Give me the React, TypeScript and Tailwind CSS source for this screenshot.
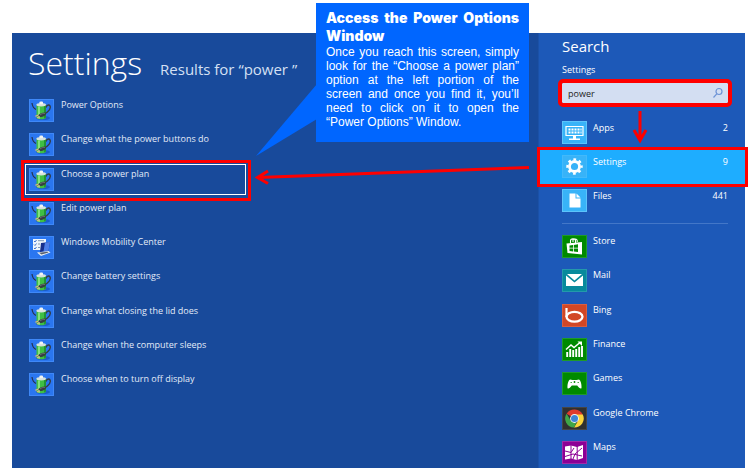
import React from 'react';

type IconName =
    | 'battery'
    | 'mobility'
    | 'apps'
    | 'settings'
    | 'files'
    | 'store'
    | 'mail'
    | 'bing'
    | 'finance'
    | 'games'
    | 'chrome'
    | 'maps';

interface ResultItem {
    label: string;
    icon: IconName;
    selected?: boolean;
}

interface ScopeItem {
    label: string;
    icon: IconName;
    count: number;
    selected?: boolean;
}

const results: ResultItem[] = [
    { label: 'Power Options', icon: 'battery' },
    { label: 'Change what the power buttons do', icon: 'battery' },
    { label: 'Choose a power plan', icon: 'battery', selected: true },
    { label: 'Edit power plan', icon: 'battery' },
    { label: 'Windows Mobility Center', icon: 'mobility' },
    { label: 'Change battery settings', icon: 'battery' },
    { label: 'Change what closing the lid does', icon: 'battery' },
    { label: 'Change when the computer sleeps', icon: 'battery' },
    { label: 'Choose when to turn off display', icon: 'battery' },
];

const scopes: ScopeItem[] = [
    { label: 'Apps', icon: 'apps', count: 2 },
    { label: 'Settings', icon: 'settings', count: 9, selected: true },
    { label: 'Files', icon: 'files', count: 441 },
];

const apps: { label: string; icon: IconName }[] = [
    { label: 'Store', icon: 'store' },
    { label: 'Mail', icon: 'mail' },
    { label: 'Bing', icon: 'bing' },
    { label: 'Finance', icon: 'finance' },
    { label: 'Games', icon: 'games' },
    { label: 'Google Chrome', icon: 'chrome' },
    { label: 'Maps', icon: 'maps' },
];

const tileColors: Record<IconName, string> = {
    battery: 'bg-[#2a76f0] border-[#3f88f8]',
    mobility: 'bg-[#2a76f0] border-[#3f88f8]',
    apps: 'bg-[#38b3f8] border-[#5cc3fb]',
    settings: 'bg-[#38b3f8] border-[#43b9fa]',
    files: 'bg-[#38b3f8] border-[#5cc3fb]',
    store: 'bg-[#008a00] border-[#1f9a2a]',
    mail: 'bg-[#078a9c] border-[#2499ab]',
    bing: 'bg-[#d24726] border-[#d95e41]',
    finance: 'bg-[#008a00] border-[#1f9a2a]',
    games: 'bg-[#008a00] border-[#1f9a2a]',
    chrome: 'bg-[#303030] border-[#454545]',
    maps: 'bg-[#8c0095] border-[#a02aa8]',
};

const Glyph: React.FC<{ name: IconName }> = ({ name }) => {
    switch (name) {
        case 'battery':
            return (
                <>
                    <ellipse cx="14" cy="19" rx="7" ry="2" fill="#1c5cc8" />
                    <path d="M3 4c.3 3 1 5 4 6.500" fill="none" stroke="#26324c" strokeWidth="1.200" />
                    <path d="M17 8.500c1-3.500 4.500-3 4.300 0-.2 2.800-2.500 4-4 5.500" fill="none" stroke="#343c45" strokeWidth="1.400" />
                    <path d="M7.500 6v12.500c0 2.400 9.500 2.400 9.500 0V6z" fill="#3fbf45" />
                    <path d="M9 7.500v12c.5.200 1.200.3 2 .3V7.500z" fill="#84df7e" />
                    <path d="M15 7v12.500l2-1V6z" fill="#229434" />
                    <ellipse cx="12.200" cy="5.800" rx="4.800" ry="1.700" fill="#d8e2dc" />
                    <path d="M10.500 4.800V3.200c0-.8 3.500-.8 3.500 0v1.600c0 .7-3.500.7-3.500 0z" fill="#f2f5f2" />
                    <path d="M9 17c1-2.500 4.500-4 8.500-3.500 0 2.500-3 4.500-6.500 4.600z" fill="#363d42" />
                    <path d="M11 16c1.500-1.300 3.200-1.700 5-1.600" fill="none" stroke="#7d8587" strokeWidth=".7" />
                    <path d="M6.300 17.300l3-1.200M7.800 19l3-1.400" stroke="#d9b27c" strokeWidth="1.200" />
                </>
            );
        case 'mobility':
            return (
                <>
                    <path d="M4 3h13v11H4z" fill="#eef4fb" />
                    <path d="M5 5l1 1 1.500-2M5 8.500l1 1 1.500-2M5 12l1 1 1.500-2" fill="none" stroke="#2c69cf" strokeWidth=".9" />
                    <path d="M9 4.700h6M9 8h2M9 11.500h2" stroke="#8098b5" strokeWidth="1" />
                    <path d="M12 7l9-1-1.500 9-8.500 1z" fill="#172f8c" />
                    <path d="M16 6.600l5-.6-1.500 9-5 .5z" fill="#4d7ee8" />
                    <path d="M8 16.500l11.500-1.500 2 1.500-9.500 3.500z" fill="#e9edf1" />
                    <path d="M10 16.800l8.500-1 1 .6-7 2.200z" fill="#59616f" />
                </>
            );
        case 'apps':
            return (
                <>
                    <path d="M4 5.500h17v9H4z" fill="none" stroke="#fff" strokeWidth="1.200" />
                    <path d="M6.500 8.500h2m1 0h2m1 0h2m1 0h2m1 0h1M6.500 11.500h2m1 0h2m1 0h2m1 0h2m1 0h1" stroke="#fff" strokeWidth="2" />
                    <path d="M11 15h3v2.500h4v1.500H7v-1.500h4z" fill="#fff" />
                </>
            );
        case 'settings':
            return (
                <g fill="none" stroke="#fff">
                    <circle cx="12.500" cy="11.500" r="5" strokeWidth="2.800" />
                    <circle cx="12.500" cy="11.500" r="7" strokeWidth="2.400" strokeDasharray="2.750 2.750" strokeDashoffset="1.370" />
                </g>
            );
        case 'files':
            return (
                <>
                    <path d="M7.500 4.500h6v5h5v9h-11z" fill="#fff" />
                    <path d="M14.500 4.500l4 4h-4z" fill="#fff" />
                </>
            );
        case 'store':
            return (
                <>
                    <path d="M8.500 8V5.800c0-2.600 5-2.600 5 0V8M11 7V5c.5-1.600 4-1.300 4.200.5V7" fill="none" stroke="#fff" strokeWidth="1.100" />
                    <path d="M4.500 8.500L20 7v12.500L5.500 18z" fill="#fff" />
                    <path d="M7.500 10.500l3.500-.5v2.800H7.500zM11.800 9.900l4.200-.6v3.500h-4.200zM7.500 13.600H11v2.900l-3.500-.4zM11.800 13.600H16v3.500l-4.200-.5z" fill="#008a00" />
                </>
            );
        case 'mail':
            return (
                <>
                    <path d="M4 6.500V17h17V6.500l-8.500 7z" fill="#fff" />
                    <path d="M5 5h15l-7.500 6.500z" fill="#fff" />
                </>
            );
        case 'bing':
            return (
                <>
                    <path d="M4.500 4v9" stroke="#fff" strokeWidth="2.200" />
                    <ellipse cx="12.500" cy="12.800" rx="8" ry="4.900" fill="none" stroke="#fff" strokeWidth="2.300" />
                </>
            );
        case 'finance':
            return (
                <>
                    <path d="M4 11.500l5-4.500 3 2.500 6-5" fill="none" stroke="#fff" strokeWidth="1.500" />
                    <path d="M15.500 3.500H20V8z" fill="#fff" />
                    <path d="M5.200 19v-5M8.200 19v-8M11.200 19v-7M14.200 19v-8M17.200 19V9M20 19V8" stroke="#fff" strokeWidth="1.900" />
                </>
            );
        case 'games':
            return (
                <>
                    <path d="M8 7.500l2.500.5h4l2.500-.5c1.500.8 2.800 4.500 2.500 8.500-.6 1.500-2.500-.3-4.300-2.500H9.800C8 15.700 6.100 17.500 5.500 16 5.200 12 6.500 8.300 8 7.500z" fill="#fff" />
                    <circle cx="12.500" cy="10" r=".9" fill="#008a00" />
                    <path d="M8.500 10.500h1.500M15.500 10.500H17" stroke="#008a00" strokeWidth=".7" />
                </>
            );
        case 'chrome':
            return (
                <>
                    <path d="M12.500 11.500L4.640 6.630A9.250 9 0 0 1 20.800 7.500z" fill="#df3b2d" />
                    <path d="M12.500 7.500h8.300A9.250 9 0 0 1 12 20.500l4-6.500z" fill="#fbd43a" />
                    <path d="M4.640 6.630L9 14l5.500 1.500-2.500 5A9.250 9 0 0 1 4.640 6.630z" fill="#3fa648" />
                    <circle cx="12.500" cy="11.500" r="4.400" fill="#f4f4f4" />
                    <circle cx="12.500" cy="11.500" r="3.500" fill="#3d85d6" />
                </>
            );
        case 'maps':
            return (
                <>
                    <path d="M3 5.500l6-1 6 1.500 6-2v13l-6 2-6-1.500-6 1z" fill="#fff" />
                    <path d="M9 4v14M15.200 5v15M3 10l6 1.500 3-4.500M3 15.500l8-2.500 9 2M11 18l2-5 7-6" fill="none" stroke="#8c0095" strokeWidth="1" />
                </>
            );
        default:
            return null;
    }
};

const Tile: React.FC<{ name: IconName }> = ({ name }) => (
    <span className={`${tileColors[name]} border w-[25px] h-[23px] shrink-0 overflow-hidden`}>
        <svg viewBox="1 1 23 21" className="block w-full h-full" aria-hidden="true">
            <Glyph name={name} />
        </svg>
    </span>
);

const ResultsPane: React.FC = () => (
    <main className="flex-1 flex flex-col bg-[#184a9b] pl-[13px] pb-[68px]">
        <header className="h-[62px] flex items-baseline gap-[18px] pl-[3px] pt-2 whitespace-nowrap">
            <h1 className="text-[32px] leading-[44px] font-light">Settings</h1>
            <p className="text-[15px] leading-[24px] text-[#d5e0f4]">Results for “power ”</p>
        </header>
        <ul className="flex-1 flex flex-col justify-between">
            {results.map(item => (
                <li key={item.label}>
                    <button
                        type="button"
                        className={`relative w-[221px] flex items-start gap-[7px] p-[3px] border text-left text-[9px] leading-3 text-[#e3ebf8] ${
                            item.selected ? 'border-white' : 'border-transparent'
                        }`}
                    >
                        <Tile name={item.icon} />
                        <span className="whitespace-nowrap">{item.label}</span>
                        {item.selected && (
                            <span className="absolute -top-[5px] -left-[5px] -right-[6px] -bottom-[7px] border-[3px] border-[#fe0000]" />
                        )}
                    </button>
                </li>
            ))}
        </ul>
    </main>
);

const SearchPane: React.FC = () => (
    <aside className="w-[207px] shrink-0 flex flex-col bg-[#1d59b8] border-l border-[#1a51a8]">
        <form className="flex flex-col pl-[23px] pr-[17px]" onSubmit={e => e.preventDefault()}>
            <h2 className="text-[15px] leading-[26px]">Search</h2>
            <label htmlFor="query" className="mt-[5px] mb-[7px] text-[9px] leading-3">Settings</label>
            <div className="flex items-center h-[20px] bg-[#d3def2] outline-4 outline-[#fe0000] rounded-[1px]">
                <input
                    id="query"
                    type="text"
                    defaultValue="power"
                    className="flex-1 min-w-0 h-full pl-[6px] text-[9px] leading-3 text-[#1c1c1c] bg-transparent outline-none"
                />
                <button type="submit" aria-label="Search" className="pr-1">
                    <svg viewBox="0 0 12 12" className="w-3 h-3" fill="none" stroke="#6d93d6" strokeWidth="1.200">
                        <circle cx="7" cy="4.500" r="3" />
                        <path d="M4.800 6.800L1.500 10.500" />
                    </svg>
                </button>
            </div>
        </form>

        <ul className="mt-[13px]">
            {scopes.map(scope => (
                <li key={scope.label}>
                    <button
                        type="button"
                        className={`relative w-full h-[34px] flex items-start gap-[6px] pt-[5px] pl-[23px] pr-[17px] text-[9px] leading-[14px] ${
                            scope.selected ? 'bg-[#1eadff]' : ''
                        }`}
                    >
                        <Tile name={scope.icon} />
                        <span className="flex-1 text-left">{scope.label}</span>
                        <span>{scope.count}</span>
                        {scope.selected && (
                            <span className="absolute -inset-y-[3px] -left-[2px] -right-[3px] border-[3px] border-[#fe0000]" />
                        )}
                    </button>
                </li>
            ))}
        </ul>

        <hr className="mt-[5px] mb-[6px] ml-[23px] mr-[17px] border-[#4377c8]" />

        <ul className="flex-1 flex flex-col justify-between">
            {apps.map(app => (
                <li key={app.label}>
                    <button type="button" className="flex items-start gap-[6px] h-8 pt-[5px] pl-[23px] text-[9px] leading-3">
                        <Tile name={app.icon} />
                        <span>{app.label}</span>
                    </button>
                </li>
            ))}
        </ul>
    </aside>
);

// Red arrows and the callout's pointer, drawn over both panes
const Annotations: React.FC = () => (
    <svg width="752" height="472" viewBox="0 0 752 472" className="absolute top-0 left-0 pointer-events-none" aria-hidden="true">
        <path d="M317 84L256 156L317 119z" fill="#0066ff" />
        <g fill="none" stroke="#fe0000" strokeWidth="3">
            <path d="M529 167.500L258 177.500M268 171L257.500 177.500L268 183.500" />
            <path d="M640 111V140M634 130L640 140.500L646 130" />
        </g>
    </svg>
);

const Callout: React.FC = () => (
    <section className="absolute left-[316px] top-[3px] w-[213px] h-[139px] pt-[6px] px-[10px] bg-[#0066ff] font-['Liberation_Sans',Arial,sans-serif] text-justify">
        <h3 className="font-[Inter,sans-serif] font-black text-[14px] leading-[18px]">Access the Power Options Window</h3>
        <p className="text-[12px] leading-[14px]">
            Once you reach this screen, simply look for the “Choose a power plan” option at the left portion of the
            screen and once you find it, you’ll need to click on it to open the “Power Options” Window.
        </p>
    </section>
);

export default function App() {
    return (
        <div className="relative min-h-screen flex bg-white pt-[33px] pl-3 pr-[7px] pb-1 text-white font-['Open_Sans','Noto_Sans',sans-serif]">
            <ResultsPane />
            <SearchPane />
            <Annotations />
            <Callout />
        </div>
    );
}
